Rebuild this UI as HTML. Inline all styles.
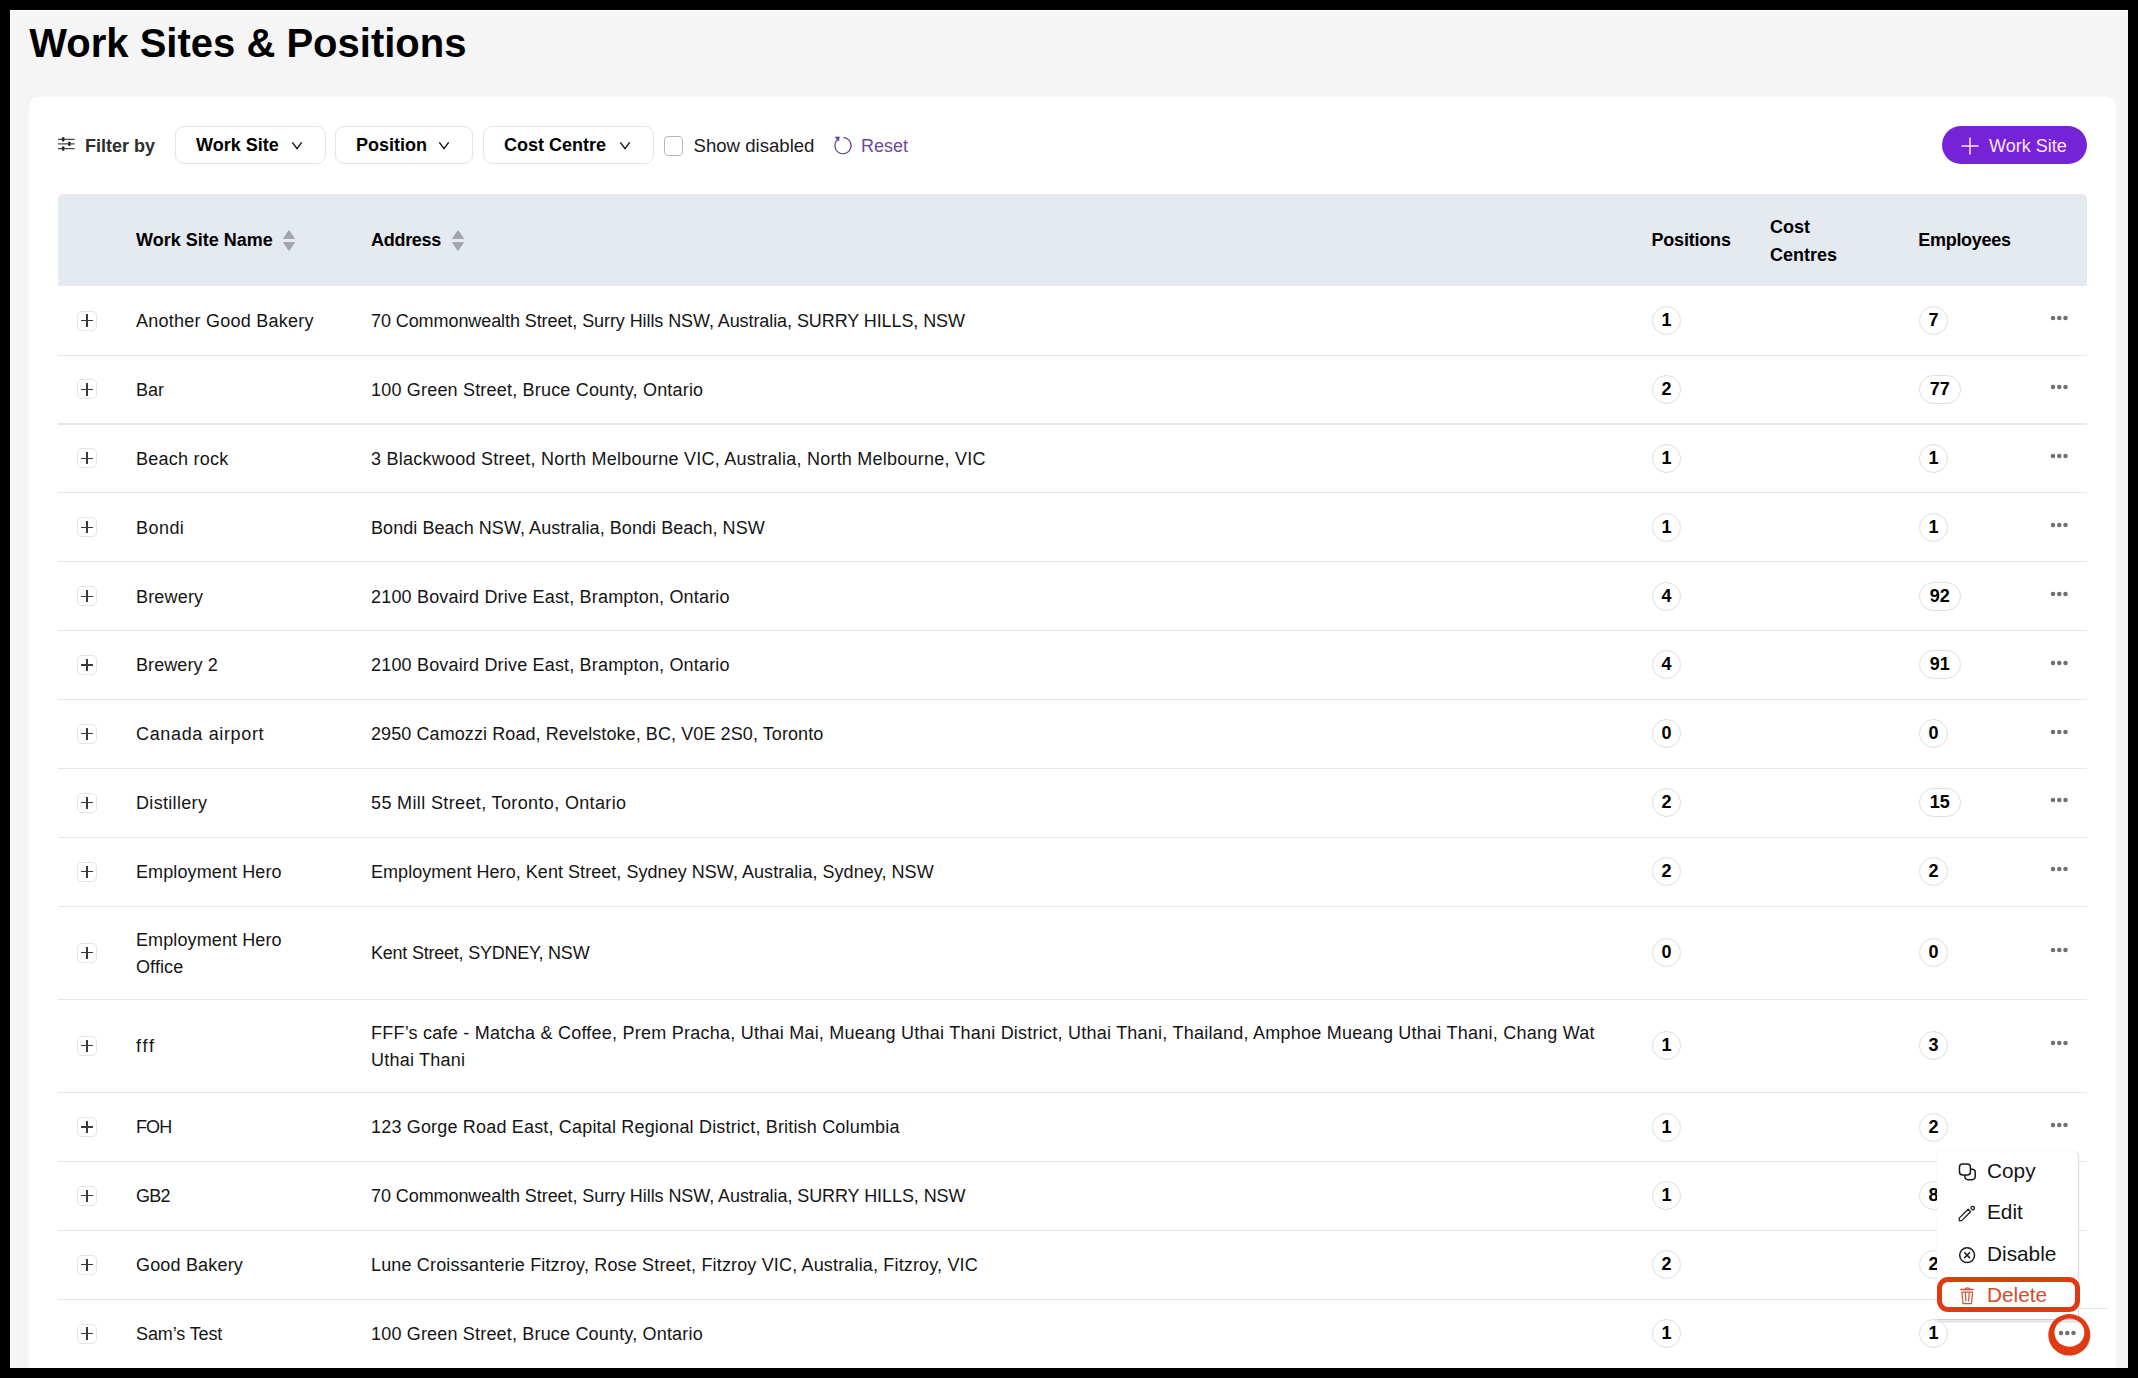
<!DOCTYPE html>
<html><head><meta charset="utf-8"><title>Work Sites &amp; Positions</title>
<style>
*{box-sizing:border-box;margin:0;padding:0}
html,body{width:2138px;height:1378px;overflow:hidden;background:#000;font-family:"Liberation Sans",sans-serif;color:#121212}
#vp{position:absolute;left:10px;top:10px;width:2118px;height:1358px;background:#f5f5f5;overflow:hidden;box-shadow:inset 1px 1px 0 #fff}
#pg{position:absolute;left:-10px;top:-10px;width:2138px;height:1378px}
.a{position:absolute}
h1{position:absolute;left:29.3px;top:18.8px;font-size:40px;line-height:48px;font-weight:bold;color:#000;white-space:nowrap}
#card{position:absolute;left:29px;top:97px;width:2087px;height:1400px;background:#fff;border-radius:10px}
.ftxt{position:absolute;font-size:18px;line-height:24px;white-space:nowrap}
.btn{position:absolute;top:126px;height:38px;border:1px solid #e3e3e3;border-radius:9px;background:#fff}
.btn span{position:absolute;left:20px;top:6px;font-size:18px;line-height:24px;font-weight:bold;color:#000;white-space:nowrap}
.btn svg{position:absolute;top:14.5px}
#thead{position:absolute;left:58px;top:194px;width:2029px;height:92px;background:#e5e9f0;border-radius:5px 5px 0 0}
.th{position:absolute;font-size:18px;line-height:27px;font-weight:bold;color:#000;white-space:nowrap}
#tbody{position:absolute;left:58px;top:0;width:2029px}
.row{position:absolute;left:0;width:2029px}
.sep{position:absolute;left:0;bottom:-0.6px;width:2029px;height:1.1px;background:#e6e6e6}
.exp{position:absolute;left:19.3px;width:19.5px;height:20px;border:1px solid #e4e4e6;border-radius:5px}
.exp:before{content:"";position:absolute;left:2.9px;top:8.35px;width:12px;height:1.2px;background:#3a3a3a}
.exp:after{content:"";position:absolute;left:8.1px;top:2.9px;width:1.2px;height:12.2px;background:#3a3a3a}
.cell{position:absolute;display:flex;align-items:center;padding-top:1.6px;font-size:18px;line-height:26.8px;color:#151515}
.nm{left:78px;width:200px}
.ad{left:313px;width:1260px;white-space:nowrap}
.bdg{position:absolute;min-width:29px;height:29px;border:1px solid #dedede;border-radius:15px;text-align:center;font-size:18px;line-height:27px;font-weight:bold;color:#000;padding:0}
.dt{position:absolute;left:1992px;height:10px}
#menu{z-index:10;position:absolute;left:1937px;top:1150.5px;width:142px;height:168.5px;background:#fff;border-radius:4px;box-shadow:0 0 2px rgba(0,0,0,0.08), 0 1px 0 #d3d3d3, 0 2.4px 0 #ececec, 0 3.2px 0 #d3d3d3;border-right:1.6px solid #dadcdf;border-radius:4px 6px 0 0}
.mi{position:absolute;font-size:20.8px;line-height:26px;color:#151515;white-space:nowrap}
.dots{position:absolute;left:0;top:2px;fill:#6f6f73}
</style></head><body>
<div id="vp"><div id="pg">
<h1>Work Sites &amp; Positions</h1>
<div id="card"></div>

<svg class="a" style="left:57px;top:136px" width="19" height="15" viewBox="0 0 19 15" fill="#2a2a2a" stroke="#4a4a4a" stroke-width="1.3" stroke-linecap="round">
<path d="M1.4 3.35H5.2M8.0 3.35H17.3M1.4 7.8H11.2M14.2 7.8H17.3M1.4 12.6H5.2M8.0 12.6H17.3"/>
<ellipse cx="6.2" cy="3.35" rx="1.55" ry="2.35" stroke="none"/><ellipse cx="12.4" cy="7.8" rx="1.55" ry="2.35" stroke="none"/><ellipse cx="6.2" cy="12.6" rx="1.55" ry="2.35" stroke="none"/>
</svg>
<div class="ftxt" style="left:85px;top:134.3px;font-weight:bold;color:#2e2e2e">Filter by</div>

<div class="btn" style="left:175px;width:151px"><span>Work Site</span><svg style="left:116.3px" width="10" height="8" viewBox="0 0 10 8" fill="none" stroke="#111" stroke-width="1.4" stroke-linecap="round"><path d="M0.7 0.8L5 6.6L9.3 0.8"/></svg></div>
<div class="btn" style="left:335px;width:138px"><span>Position</span><svg style="left:103.3px" width="10" height="8" viewBox="0 0 10 8" fill="none" stroke="#111" stroke-width="1.4" stroke-linecap="round"><path d="M0.7 0.8L5 6.6L9.3 0.8"/></svg></div>
<div class="btn" style="left:483px;width:171px"><span>Cost Centre</span><svg style="left:136.3px" width="10" height="8" viewBox="0 0 10 8" fill="none" stroke="#111" stroke-width="1.4" stroke-linecap="round"><path d="M0.7 0.8L5 6.6L9.3 0.8"/></svg></div>

<div class="a" style="left:664px;top:136px;width:19px;height:19.5px;border:1.3px solid #b8b8b8;border-radius:4px;background:#fff"></div>
<div class="ftxt" style="left:693.5px;top:134px;color:#1a1a1a;font-size:18.6px">Show disabled</div>
<svg class="a" style="left:830.5px;top:135px" width="22" height="22" viewBox="0 0 22 22" fill="none" stroke="#5e4287" stroke-width="1.15">
<path d="M12.4 2.55A8.1 8.1 0 1 1 6.6 4.6"/><path d="M4.0 2.05L8.3 1.9L7.7 6.1Z" fill="#6a3aa2" stroke="#6a3aa2" stroke-width="0.6" stroke-linejoin="round"/>
</svg>
<div class="ftxt" style="left:861px;top:134px;color:#6b4a9c">Reset</div>

<div class="a" style="left:1942px;top:126px;width:145px;height:38px;border-radius:19px;background:#7622d7"></div>
<svg class="a" style="left:1961px;top:137px" width="18" height="18" viewBox="0 0 18 18" stroke="#fbe4ff" stroke-width="1.5"><path d="M9 0.5V17.5M0.5 9H17.5"/></svg>
<div class="ftxt" style="left:1989px;top:134px;color:#fde8ff">Work Site</div>

<div id="thead">
<div class="th" style="left:78px;top:33px">Work Site Name</div>
<svg class="a" style="left:224px;top:35px" width="14" height="23" viewBox="0 0 14 23" fill="#a3a5ab" stroke="#a3a5ab" stroke-width="1" stroke-linejoin="round"><path d="M7 1.6L12.4 9.4H1.6Z"/><path d="M7 21.5L12.4 13.6H1.6Z"/></svg>
<div class="th" style="left:313px;top:33px;letter-spacing:-0.28px">Address</div>
<svg class="a" style="left:393px;top:35px" width="14" height="23" viewBox="0 0 14 23" fill="#a3a5ab" stroke="#a3a5ab" stroke-width="1" stroke-linejoin="round"><path d="M7 1.6L12.4 9.4H1.6Z"/><path d="M7 21.5L12.4 13.6H1.6Z"/></svg>
<div class="th" style="left:1593.5px;top:33px;letter-spacing:-0.2px">Positions</div>
<div class="th" style="left:1712px;top:20px;line-height:27.7px">Cost<br>Centres</div>
<div class="th" style="left:1860.3px;top:33px;letter-spacing:-0.3px">Employees</div>
</div>

<div id="tbody">
<div class="row" style="top:286.0px;height:69.1px"><div class="exp" style="top:24.6px"></div><div class="cell nm" style="top:0;height:69.1px"><span style="letter-spacing:0.250px">Another Good Bakery</span></div><div class="cell ad" style="top:0;height:69.1px"><span style="letter-spacing:-0.082px">70 Commonwealth Street, Surry Hills NSW, Australia, SURRY HILLS, NSW</span></div><div class="bdg" style="left:1594px;top:20.1px;width:29px">1</div><div class="bdg" style="left:1861px;top:20.1px;width:29px">7</div><div class="dt" style="top:27.1px"><svg class="dots" width="20" height="6" viewBox="0 0 20 6"><circle cx="3" cy="3" r="2.25"/><circle cx="9.25" cy="3" r="2.25"/><circle cx="15.5" cy="3" r="2.25"/></svg></div><div class="sep"></div></div>
<div class="row" style="top:355.1px;height:68.9px"><div class="exp" style="top:24.4px"></div><div class="cell nm" style="top:0;height:68.9px"><span style="letter-spacing:0.000px">Bar</span></div><div class="cell ad" style="top:0;height:68.9px"><span style="letter-spacing:0.192px">100 Green Street, Bruce County, Ontario</span></div><div class="bdg" style="left:1594px;top:19.9px;width:29px">2</div><div class="bdg" style="left:1861px;top:19.9px;width:41.6px">77</div><div class="dt" style="top:27.0px"><svg class="dots" width="20" height="6" viewBox="0 0 20 6"><circle cx="3" cy="3" r="2.25"/><circle cx="9.25" cy="3" r="2.25"/><circle cx="15.5" cy="3" r="2.25"/></svg></div><div class="sep"></div></div>
<div class="row" style="top:424.0px;height:68.9px"><div class="exp" style="top:24.4px"></div><div class="cell nm" style="top:0;height:68.9px"><span style="letter-spacing:0.233px">Beach rock</span></div><div class="cell ad" style="top:0;height:68.9px"><span style="letter-spacing:0.244px">3 Blackwood Street, North Melbourne VIC, Australia, North Melbourne, VIC</span></div><div class="bdg" style="left:1594px;top:19.9px;width:29px">1</div><div class="bdg" style="left:1861px;top:19.9px;width:29px">1</div><div class="dt" style="top:27.0px"><svg class="dots" width="20" height="6" viewBox="0 0 20 6"><circle cx="3" cy="3" r="2.25"/><circle cx="9.25" cy="3" r="2.25"/><circle cx="15.5" cy="3" r="2.25"/></svg></div><div class="sep"></div></div>
<div class="row" style="top:492.9px;height:68.9px"><div class="exp" style="top:24.4px"></div><div class="cell nm" style="top:0;height:68.9px"><span style="letter-spacing:0.450px">Bondi</span></div><div class="cell ad" style="top:0;height:68.9px"><span style="letter-spacing:0.058px">Bondi Beach NSW, Australia, Bondi Beach, NSW</span></div><div class="bdg" style="left:1594px;top:19.9px;width:29px">1</div><div class="bdg" style="left:1861px;top:19.9px;width:29px">1</div><div class="dt" style="top:27.0px"><svg class="dots" width="20" height="6" viewBox="0 0 20 6"><circle cx="3" cy="3" r="2.25"/><circle cx="9.25" cy="3" r="2.25"/><circle cx="15.5" cy="3" r="2.25"/></svg></div><div class="sep"></div></div>
<div class="row" style="top:561.8px;height:68.8px"><div class="exp" style="top:24.4px"></div><div class="cell nm" style="top:0;height:68.8px"><span style="letter-spacing:0.183px">Brewery</span></div><div class="cell ad" style="top:0;height:68.8px"><span style="letter-spacing:0.180px">2100 Bovaird Drive East, Brampton, Ontario</span></div><div class="bdg" style="left:1594px;top:19.9px;width:29px">4</div><div class="bdg" style="left:1861px;top:19.9px;width:41.6px">92</div><div class="dt" style="top:27.0px"><svg class="dots" width="20" height="6" viewBox="0 0 20 6"><circle cx="3" cy="3" r="2.25"/><circle cx="9.25" cy="3" r="2.25"/><circle cx="15.5" cy="3" r="2.25"/></svg></div><div class="sep"></div></div>
<div class="row" style="top:630.6px;height:68.9px"><div class="exp" style="top:24.4px"></div><div class="cell nm" style="top:0;height:68.9px"><span style="letter-spacing:0.087px">Brewery 2</span></div><div class="cell ad" style="top:0;height:68.9px"><span style="letter-spacing:0.180px">2100 Bovaird Drive East, Brampton, Ontario</span></div><div class="bdg" style="left:1594px;top:19.9px;width:29px">4</div><div class="bdg" style="left:1861px;top:19.9px;width:41.6px">91</div><div class="dt" style="top:27.0px"><svg class="dots" width="20" height="6" viewBox="0 0 20 6"><circle cx="3" cy="3" r="2.25"/><circle cx="9.25" cy="3" r="2.25"/><circle cx="15.5" cy="3" r="2.25"/></svg></div><div class="sep"></div></div>
<div class="row" style="top:699.5px;height:68.9px"><div class="exp" style="top:24.4px"></div><div class="cell nm" style="top:0;height:68.9px"><span style="letter-spacing:0.654px">Canada airport</span></div><div class="cell ad" style="top:0;height:68.9px"><span style="letter-spacing:0.088px">2950 Camozzi Road, Revelstoke, BC, V0E 2S0, Toronto</span></div><div class="bdg" style="left:1594px;top:19.9px;width:29px">0</div><div class="bdg" style="left:1861px;top:19.9px;width:29px">0</div><div class="dt" style="top:27.0px"><svg class="dots" width="20" height="6" viewBox="0 0 20 6"><circle cx="3" cy="3" r="2.25"/><circle cx="9.25" cy="3" r="2.25"/><circle cx="15.5" cy="3" r="2.25"/></svg></div><div class="sep"></div></div>
<div class="row" style="top:768.4px;height:68.9px"><div class="exp" style="top:24.4px"></div><div class="cell nm" style="top:0;height:68.9px"><span style="letter-spacing:0.322px">Distillery</span></div><div class="cell ad" style="top:0;height:68.9px"><span style="letter-spacing:0.365px">55 Mill Street, Toronto, Ontario</span></div><div class="bdg" style="left:1594px;top:19.9px;width:29px">2</div><div class="bdg" style="left:1861px;top:19.9px;width:41.6px">15</div><div class="dt" style="top:27.0px"><svg class="dots" width="20" height="6" viewBox="0 0 20 6"><circle cx="3" cy="3" r="2.25"/><circle cx="9.25" cy="3" r="2.25"/><circle cx="15.5" cy="3" r="2.25"/></svg></div><div class="sep"></div></div>
<div class="row" style="top:837.3px;height:68.9px"><div class="exp" style="top:24.5px"></div><div class="cell nm" style="top:0;height:68.9px"><span style="letter-spacing:0.107px">Employment Hero</span></div><div class="cell ad" style="top:0;height:68.9px"><span style="letter-spacing:0.044px">Employment Hero, Kent Street, Sydney NSW, Australia, Sydney, NSW</span></div><div class="bdg" style="left:1594px;top:20.0px;width:29px">2</div><div class="bdg" style="left:1861px;top:20.0px;width:29px">2</div><div class="dt" style="top:27.0px"><svg class="dots" width="20" height="6" viewBox="0 0 20 6"><circle cx="3" cy="3" r="2.25"/><circle cx="9.25" cy="3" r="2.25"/><circle cx="15.5" cy="3" r="2.25"/></svg></div><div class="sep"></div></div>
<div class="row" style="top:906.2px;height:93.1px"><div class="exp" style="top:36.5px"></div><div class="cell nm" style="top:0;height:93.1px"><span style="letter-spacing:0.107px">Employment Hero<br>Office</span></div><div class="cell ad" style="top:0;height:93.1px"><span style="letter-spacing:-0.222px">Kent Street, SYDNEY, NSW</span></div><div class="bdg" style="left:1594px;top:32.0px;width:29px">0</div><div class="bdg" style="left:1861px;top:32.0px;width:29px">0</div><div class="dt" style="top:39.1px"><svg class="dots" width="20" height="6" viewBox="0 0 20 6"><circle cx="3" cy="3" r="2.25"/><circle cx="9.25" cy="3" r="2.25"/><circle cx="15.5" cy="3" r="2.25"/></svg></div><div class="sep"></div></div>
<div class="row" style="top:999.3px;height:93.2px"><div class="exp" style="top:36.6px"></div><div class="cell nm" style="top:0;height:93.2px"><span style="letter-spacing:1.850px">fff</span></div><div class="cell ad" style="top:0;height:93.2px"><span style="letter-spacing:0.238px">FFF&rsquo;s cafe - Matcha &amp; Coffee, Prem Pracha, Uthai Mai, Mueang Uthai Thani District, Uthai Thani, Thailand, Amphoe Mueang Uthai Thani, Chang Wat<br>Uthai Thani</span></div><div class="bdg" style="left:1594px;top:32.1px;width:29px">1</div><div class="bdg" style="left:1861px;top:32.1px;width:29px">3</div><div class="dt" style="top:39.2px"><svg class="dots" width="20" height="6" viewBox="0 0 20 6"><circle cx="3" cy="3" r="2.25"/><circle cx="9.25" cy="3" r="2.25"/><circle cx="15.5" cy="3" r="2.25"/></svg></div><div class="sep"></div></div>
<div class="row" style="top:1092.5px;height:68.9px"><div class="exp" style="top:24.5px"></div><div class="cell nm" style="top:0;height:68.9px"><span style="letter-spacing:-0.900px">FOH</span></div><div class="cell ad" style="top:0;height:68.9px"><span style="letter-spacing:0.178px">123 Gorge Road East, Capital Regional District, British Columbia</span></div><div class="bdg" style="left:1594px;top:20.0px;width:29px">1</div><div class="bdg" style="left:1861px;top:20.0px;width:29px">2</div><div class="dt" style="top:27.0px"><svg class="dots" width="20" height="6" viewBox="0 0 20 6"><circle cx="3" cy="3" r="2.25"/><circle cx="9.25" cy="3" r="2.25"/><circle cx="15.5" cy="3" r="2.25"/></svg></div><div class="sep"></div></div>
<div class="row" style="top:1161.4px;height:68.9px"><div class="exp" style="top:24.4px"></div><div class="cell nm" style="top:0;height:68.9px"><span style="letter-spacing:-0.750px">GB2</span></div><div class="cell ad" style="top:0;height:68.9px"><span style="letter-spacing:-0.075px">70 Commonwealth Street, Surry Hills NSW, Australia, SURRY HILLS, NSW</span></div><div class="bdg" style="left:1594px;top:19.9px;width:29px">1</div><div class="bdg" style="left:1861px;top:19.9px;width:29px">8</div><div class="dt" style="top:27.0px"><svg class="dots" width="20" height="6" viewBox="0 0 20 6"><circle cx="3" cy="3" r="2.25"/><circle cx="9.25" cy="3" r="2.25"/><circle cx="15.5" cy="3" r="2.25"/></svg></div><div class="sep"></div></div>
<div class="row" style="top:1230.3px;height:68.9px"><div class="exp" style="top:24.5px"></div><div class="cell nm" style="top:0;height:68.9px"><span style="letter-spacing:0.180px">Good Bakery</span></div><div class="cell ad" style="top:0;height:68.9px"><span style="letter-spacing:0.161px">Lune Croissanterie Fitzroy, Rose Street, Fitzroy VIC, Australia, Fitzroy, VIC</span></div><div class="bdg" style="left:1594px;top:20.0px;width:29px">2</div><div class="bdg" style="left:1861px;top:20.0px;width:29px">2</div><div class="dt" style="top:27.0px"><svg class="dots" width="20" height="6" viewBox="0 0 20 6"><circle cx="3" cy="3" r="2.25"/><circle cx="9.25" cy="3" r="2.25"/><circle cx="15.5" cy="3" r="2.25"/></svg></div><div class="sep" style="width:2021px"></div></div>
<div class="row" style="top:1299.2px;height:68.9px"><div class="exp" style="top:24.4px"></div><div class="cell nm" style="top:0;height:68.9px"><span style="letter-spacing:-0.111px">Sam&rsquo;s Test</span></div><div class="cell ad" style="top:0;height:68.9px"><span style="letter-spacing:0.179px">100 Green Street, Bruce County, Ontario</span></div><div class="bdg" style="left:1594px;top:19.9px;width:29px">1</div><div class="bdg" style="left:1861px;top:19.9px;width:29px">1</div><div class="dt" style="left:2000.2px;top:28.8px"><svg class="dots" width="20" height="6" viewBox="0 0 20 6"><circle cx="3" cy="3" r="2.25"/><circle cx="9.25" cy="3" r="2.25"/><circle cx="15.5" cy="3" r="2.25"/></svg></div></div>
</div>

<div id="menu">
<svg class="a" style="left:21px;top:11px" width="20" height="20" viewBox="0 0 20 20" fill="none" stroke="#1a1a1a" stroke-width="1.5">
<rect x="1.45" y="1.95" width="11.0" height="11.0" rx="3.2"/>
<path d="M12.45 7.2H14.2A3 3 0 0 1 17.2 10.2V14.7A3 3 0 0 1 14.2 17.7H9.8A3 3 0 0 1 6.8 14.7V12.95"/>
</svg>
<div class="mi" style="left:50px;top:7.2px">Copy</div>
<svg class="a" style="left:21px;top:53.5px" width="20" height="20" viewBox="0 0 20 20" fill="none" stroke="#1a1a1a" stroke-width="1.25" stroke-linejoin="round">
<path d="M10.1 5.2L1.2 14.1V16.6H3.7L12.6 7.7Z"/><path d="M12.9 4.2A1.75 1.75 0 1 1 14.4 5.9Z"/>
</svg>
<div class="mi" style="left:50px;top:48.7px">Edit</div>
<svg class="a" style="left:21px;top:94px" width="20" height="20" viewBox="0 0 20 20" fill="none" stroke="#1a1a1a" stroke-width="1.5">
<circle cx="9.1" cy="10.2" r="7.4"/><path d="M6.2 7.3L12 13.1M12 7.3L6.2 13.1"/>
</svg>
<div class="mi" style="left:50px;top:90.3px">Disable</div>
<svg class="a" style="left:21px;top:135px" width="20" height="20" viewBox="0 0 20 20" fill="none" stroke="#d0503a" stroke-width="1.2" stroke-linejoin="round" stroke-linecap="round">
<path d="M2.8 3.4H15.2" stroke-width="1.5"/><path d="M7.2 3.0Q7.5 1.9 9.5 1.9Q11.5 1.9 11.8 3.0" stroke-width="1.1"/><path d="M3.9 6.2H14.5L13.5 17.6H5Z"/><path d="M7.3 6.8L7.9 14.9M11.2 6.8L10.6 14.9"/>
</svg>
<div class="mi" style="left:50px;top:131.2px;color:#d84a2b">Delete</div>
</div>
<div class="a" style="z-index:11;left:1937px;top:1277px;width:143px;height:35px;border:5px solid #e03a12;border-radius:11px"></div>
<svg class="a" style="z-index:11;left:2040px;top:1306px" width="60" height="60" viewBox="2040 1306 60 60"><path fill="#e03a12" fill-rule="evenodd" d="M2069.3 1314.0A21.0 20.8 0 1 1 2069.29 1314.0ZM2069.4 1318.5A15.0 14.1 0 1 0 2069.41 1318.5Z"/></svg>
<div class="a" style="left:2079px;top:1307.5px;width:29px;height:1.2px;background:#e6e6e6"></div>

</div></div>
</body></html>
